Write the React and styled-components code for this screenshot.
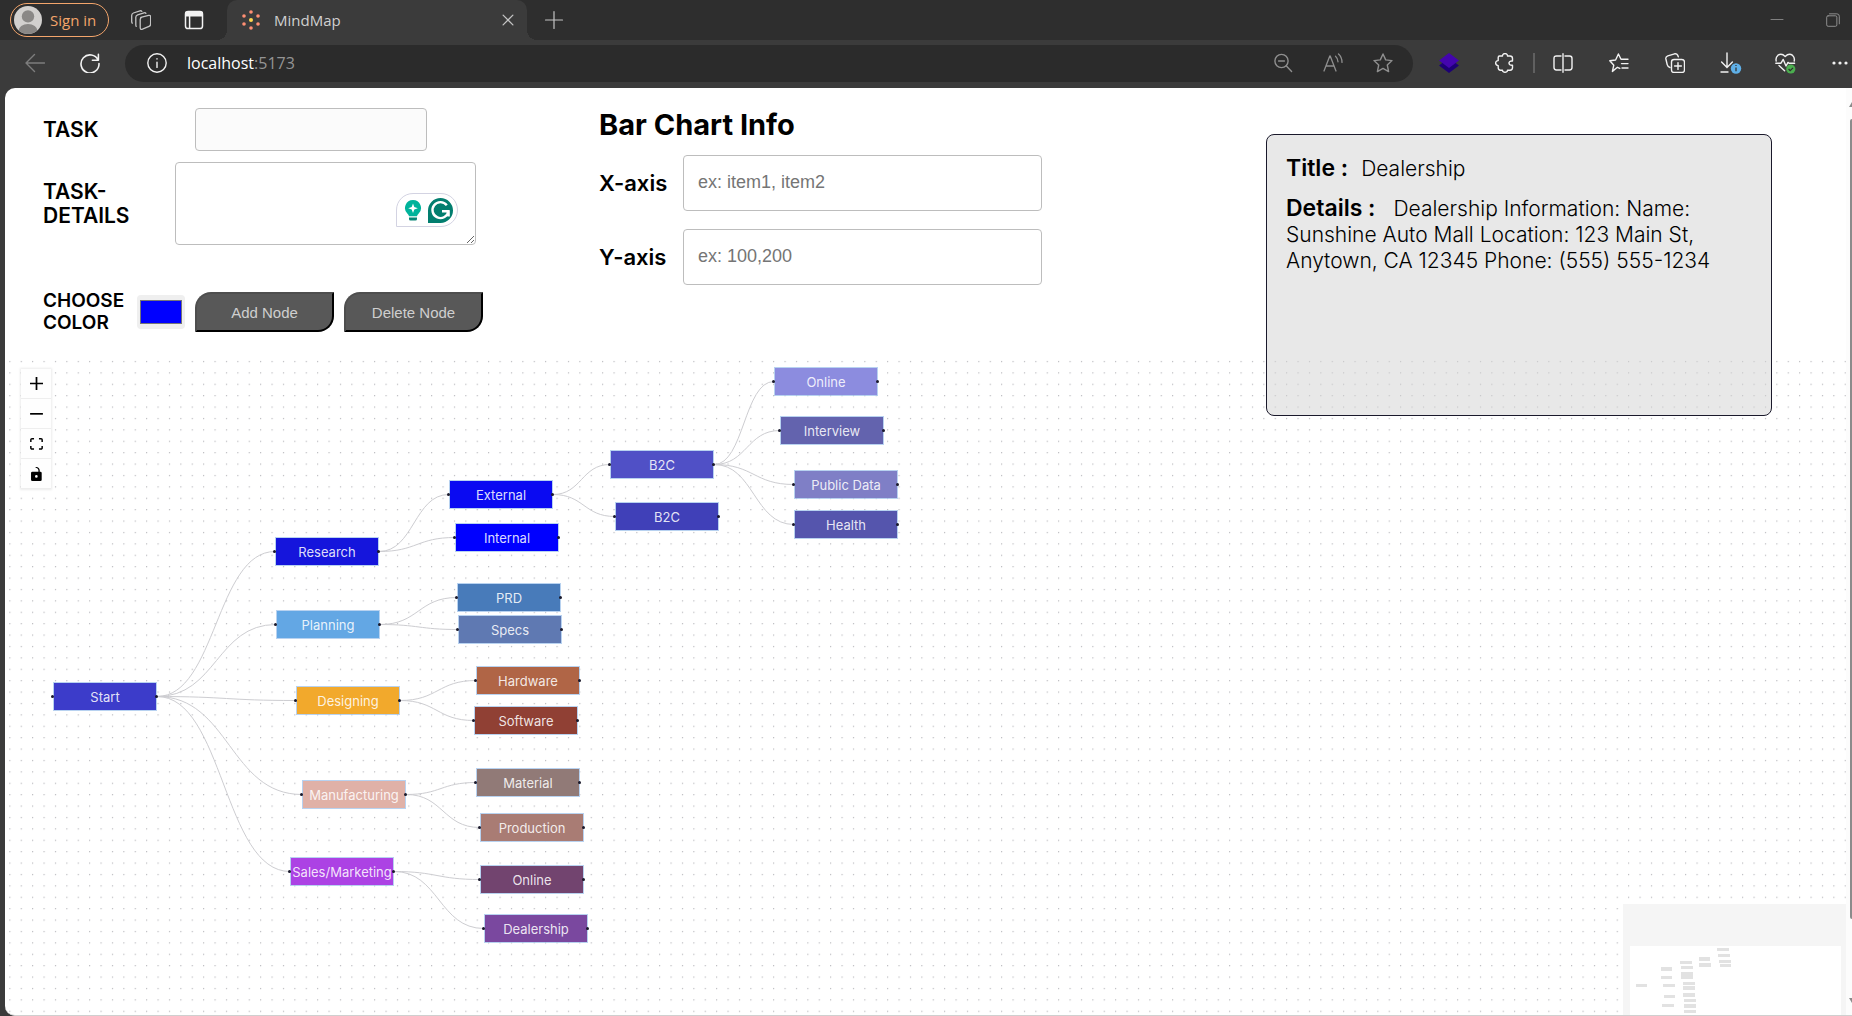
import React from "react";
import styled, { createGlobalStyle } from "styled-components";

const Global = createGlobalStyle`
  * { box-sizing: border-box; }
  html, body { margin: 0; padding: 0; }
  body { background: #3b3b3b; font-family: Inter, "Open Sans", sans-serif; color: #000; }
  button { font: inherit; cursor: pointer; }
`;

const Window = styled.div`
  display: flex;
  flex-direction: column;
  height: 100vh;
  overflow: hidden;
  background: #3b3b3b;
`;

/* ---------- browser frame ---------- */

const TabStrip = styled.header`
  display: flex;
  align-items: center;
  flex: none;
  height: 40px;
  padding: 0 12px 0 10px;
  background: #2e2e2e;
  font-family: "Open Sans", "Noto Sans", sans-serif;
  font-size: 15px;
`;

const SignIn = styled.button`
  display: flex;
  align-items: center;
  gap: 8px;
  width: 99px;
  height: 34px;
  padding: 0 3px;
  border: 1px solid #f3a56b;
  border-radius: 17px;
  background: none;
  color: #f3a56b;
  font-size: 15px;
  white-space: nowrap;
`;

const IconButton = styled.button`
  display: flex;
  flex: none;
  align-items: center;
  justify-content: ${(p) => p.$align || "center"};
  width: ${(p) => p.$w || 20}px;
  height: 30px;
  padding: 0;
  border: 0;
  background: none;
  color: ${(p) => p.$color || "#f2f2f2"};
`;

const StripTools = styled.div`
  display: flex;
  gap: 33px;
  margin: 0 23px 0 22px;
`;

const Tab = styled.div`
  position: relative;
  display: flex;
  align-items: center;
  gap: 13px;
  width: 300px;
  height: 40px;
  padding: 0 9px 0 14px;
  border-radius: 10px 10px 0 0;
  background: #3b3b3b;
  color: #d0d0d0;

  &::before, &::after {
    content: "";
    position: absolute;
    bottom: 0;
    width: 10px;
    height: 10px;
  }
  &::before { left: -10px; background: radial-gradient(circle at 0 0, transparent 10px, #3b3b3b 10px); }
  &::after { right: -10px; background: radial-gradient(circle at 100% 0, transparent 10px, #3b3b3b 10px); }
`;

const TabTitle = styled.span`
  flex: 1;
`;

const NewTab = styled.div`
  margin-left: 17px;
`;

const WindowButtons = styled.div`
  display: flex;
  gap: 33px;
  margin-left: auto;
`;

const Toolbar = styled.nav`
  display: flex;
  align-items: center;
  flex: none;
  height: 48px;
  padding: 0 4px 2px 25px;
  background: #3b3b3b;
`;

const NavButtons = styled.div`
  display: flex;
  gap: 35px;
  margin-right: 25px;
`;

const AddressBar = styled.div`
  display: flex;
  flex: 1;
  align-items: center;
  height: 37px;
  margin-right: 8px;
  padding: 0 5px 0 22px;
  border-radius: 19px;
  background: #2b2b2b;
`;

const Url = styled.div`
  flex: 1;
  margin-left: 20px;
  color: #fff;
  font-family: "Open Sans", "Noto Sans", sans-serif;
  font-size: 16px;
`;

const Port = styled.span`
  color: #949494;
`;

const Divider = styled.span`
  width: 2px;
  height: 20px;
  background: #606060;
`;

/* ---------- page ---------- */

const Page = styled.main`
  position: relative;
  display: flex;
  flex: 1;
  flex-direction: column;
  min-height: 0;
  margin-left: 5px;
  overflow: hidden;
  border-bottom: 1px solid #cfcfcf;
  border-radius: 10px 0 0 10px;
  background: #fff;
`;

const Forms = styled.section`
  display: grid;
  flex: none;
  grid-template-columns: 556px 443px;
  padding: 20px 38px 26px;
`;

const NodeForm = styled.form`
  display: flex;
  flex-direction: column;
  gap: 11px;
`;

const FormRow = styled.div`
  display: flex;
  align-items: center;
  gap: 10px;
  margin-top: ${(p) => p.$top || 0}px;
`;

const FormLabel = styled.label`
  width: ${(p) => p.$w}px;
  font-size: ${(p) => p.$size || 21}px;
  font-weight: 600;
  line-height: ${(p) => p.$line || 24}px;
`;

const TaskInput = styled.input`
  width: 232px;
  height: 43px;
  padding: 0 12px;
  border: 1px solid #bdbdbd;
  border-radius: 4px;
  background: #fbfbfb;
  font: 18px "Liberation Sans", sans-serif;
`;

const DetailsBox = styled.div`
  position: relative;
  display: flex;
`;

const DetailsInput = styled.textarea`
  width: 301px;
  height: 83px;
  border: 1px solid #bdbdbd;
  border-radius: 4px;
  background: #fff;
  font: 18px "Liberation Sans", sans-serif;
`;

const WritingBadge = styled.div`
  position: absolute;
  right: 18px;
  bottom: 18px;
  display: flex;
  align-items: center;
  gap: 6px;
  height: 34px;
  padding: 0 4px 0 7px;
  border: 1px solid #d3d3e2;
  border-radius: 17px 17px 17px 0;
  background: #fff;
`;

const ColorInput = styled.input`
  width: 48px;
  height: 34px;
  padding: 5px 3px;
  border: 0;
  border-radius: 4px;
  appearance: none;
  background: #efefef;

  &::-webkit-color-swatch-wrapper { padding: 0; }
  &::-webkit-color-swatch { border: 1px solid #777; border-radius: 0; }
`;

const NodeButton = styled.button`
  width: 139px;
  height: 40px;
  border: 2px solid;
  border-color: #4e4e4e #000 #000 #4e4e4e;
  border-radius: 16px 0;
  background: #585858;
  color: #cfcfcf;
  font-family: "Liberation Sans", Arial, sans-serif;
  font-size: 15px;
`;

const ChartForm = styled.form`
  display: flex;
  flex-direction: column;
  gap: 18px;
`;

const ChartTitle = styled.h2`
  margin: 0 0 -5px;
  font-size: 29px;
  font-weight: 700;
  line-height: 34px;
`;

const AxisRow = styled.div`
  display: flex;
  align-items: center;
`;

const AxisLabel = styled.label`
  width: 84px;
  font-size: 22px;
  font-weight: 600;
`;

const AxisInput = styled.input`
  flex: 1;
  height: 56px;
  padding: 0 14px 2px;
  border: 1px solid #bdbdbd;
  border-radius: 4px;
  background: #fff;
  font: 18px "Liberation Sans", sans-serif;

  &::placeholder { color: #757575; }
`;

const InfoCard = styled.aside`
  position: absolute;
  top: 46px;
  right: 80px;
  z-index: 2;
  width: 506px;
  height: 282px;
  padding: 20px 19px;
  border: 1px solid #1a192b;
  border-radius: 8px;
  background: rgba(209, 209, 209, 0.5);
  font-size: 21px;
  font-weight: 300;
  line-height: 26px;
`;

const InfoLine = styled.p`
  margin: 0 0 13px;
`;

const InfoName = styled.strong`
  margin-right: ${(p) => p.$gap}px;
  font-size: 23px;
  font-weight: 600;
`;

/* ---------- mind map ---------- */

const Flow = styled.section`
  position: relative;
  flex: 1;
  margin-right: 6px;
  overflow: hidden;
`;

const Layer = styled.svg`
  position: absolute;
  inset: 0;
  width: 100%;
  height: 100%;
`;

const Node = styled.div`
  position: absolute;
  display: flex;
  align-items: center;
  justify-content: center;
  width: 104px;
  height: 29px;
  border: 1px solid rgba(160, 195, 235, 0.75);
  background: ${(p) => p.$bg};
  background-clip: padding-box;
  color: rgba(255, 255, 255, 0.87);
  font-size: 13px;
  white-space: nowrap;

  &::before, &::after {
    content: "";
    position: absolute;
    top: 12px;
    width: 3px;
    height: 3px;
    border-radius: 50%;
    background: #1a192b;
  }
  &::before { left: -3px; }
  &::after { right: -2px; }
`;

const Controls = styled.div`
  position: absolute;
  top: 9px;
  left: 16px;
  display: flex;
  flex-direction: column;
  box-shadow: 0 0 2px 1px rgba(0, 0, 0, 0.08);
`;

const ControlButton = styled.button`
  display: flex;
  align-items: center;
  justify-content: center;
  width: 30px;
  height: 30px;
  padding: 0;
  border: 0;
  border-bottom: 1px solid #eee;
  background: #fefefe;
`;

const MiniMap = styled.div`
  position: absolute;
  right: 0;
  bottom: 0;
  width: 223px;
  height: 111px;
  background: #f5f5f5;
`;

const ScrollTrack = styled.div`
  position: absolute;
  top: 0;
  right: 0;
  bottom: 0;
  display: flex;
  flex-direction: column;
  align-items: flex-end;
  width: 6px;
  padding: 14px 0 12px;
  background: #fcfcfc;
  color: #8b8b8b;
`;

const ScrollThumb = styled.div`
  flex: 1;
  width: 2px;
  margin: 12px 0 79px;
  border-radius: 2px 0 0 2px;
  background: #8b8b8b;
`;

const Line = ({ size = 20, children, w = 1.4 }) => (
  <svg width={size} height={size} viewBox="0 0 20 20" fill="none" stroke="currentColor" strokeWidth={w} strokeLinecap="round" strokeLinejoin="round" aria-hidden="true">
    {children}
  </svg>
);

const Avatar = () => (
  <svg width="28" height="28" viewBox="0 0 28 28" aria-hidden="true">
    <clipPath id="face"><circle cx="14" cy="14" r="14" /></clipPath>
    <circle cx="14" cy="14" r="14" fill="#d2d0ce" />
    <g fill="#8a8886" clipPath="url(#face)">
      <circle cx="14" cy="10.4" r="6.2" />
      <ellipse cx="14" cy="25" rx="9.5" ry="7" />
    </g>
  </svg>
);

const Workspaces = () => (
  <Line w={1.3}>
    <path d="M9.8 7.4 17.6 5.4Q19.6 5 19.6 7V14Q19.6 15.8 18 16.4L11.5 19.2Q9.2 20 9.2 17.5V9.4Q9.2 7.7 11 7.1z" />
    <path d="M5.2 16.4Q4.8 15.8 4.8 14.8V7.2Q4.8 5.4 6.6 4.8L13 2.8Q14.4 2.4 14.9 3.4" />
    <path d="M1.2 13.2Q.7 12.4.7 11.6V5.4Q.7 3.6 2.4 3L9 .8Q10.2.5 10.8 1.4" />
  </Line>
);

const TabActions = () => (
  <Line w={1.5}>
    <rect x="1.5" y="1.5" width="17" height="17" rx="2.6" />
    <path d="M1.8 2.6H18.2V5.8H1.8z" fill="currentColor" />
    <path d="M5.6 6V18" />
  </Line>
);

const Favicon = () => (
  <svg width="20" height="20" viewBox="0 0 20 20" aria-hidden="true">
    <g fill="#ff8f73">
      <circle cx="10" cy="2" r="1.8" /><circle cx="10" cy="18" r="1.8" />
      <circle cx="3" cy="6" r="1.8" /><circle cx="17" cy="6" r="1.8" />
      <circle cx="3" cy="14" r="1.8" /><circle cx="17" cy="14" r="1.8" />
    </g>
    <circle cx="10" cy="10" r="2" fill="#ffd84d" />
  </svg>
);

const STAR = "M10 1 12.7 6.9 19 7.6 14.3 12 15.6 18.6 10 15.4 4.4 18.6 5.7 12 1 7.6 7.3 6.9z";

const pageTools = [
  ["Zoom out", <Line key="z"><circle cx="8.5" cy="8" r="6.6" /><path d="M5.6 8h5.8M13.2 12.8 18.6 18.4" /></Line>],
  ["Read aloud", <Line key="r" w={1.3}><path d="M1 18 6.8 3h.4L13 18M3 13h8M12.5 3.2Q15 5.4 15 8.8M15.5 1Q19 4 19 9.4" /></Line>],
  ["Add to favorites", <Line key="s"><path d={STAR} /></Line>],
];

const browserTools = [
  ["Split screen", 56, <Line key="a"><path d="M8 3H3.4Q1 3 1 5.4V14.6Q1 17 3.4 17H8M12 3h4.6Q19 3 19 5.4V14.6Q19 17 16.6 17H12M10 .8V19.2" /></Line>],
  ["Favorites", 56, <Line key="b"><path d="M10.8 15.4 8.4 14.3 3.4 18.4 4.8 12.2.8 7.8 6.6 7 9.4 1 12 6.2H19M12.5 10.6H19M13 15H19" /></Line>],
  ["Collections", 56, <Line key="c"><path d="M5 14.5Q2.8 14 2.2 11.6L.9 6Q.4 3.6 2.8 2.8L9.6.8Q11.8.4 12.8 2.4L13.3 3.8" /><rect x="6.5" y="6.5" width="13" height="13" rx="2.6" /><path d="M13 9.6v6.8M9.6 13h6.8" /></Line>],
  ["Downloads", 56, (
    <svg key="d" width="24" height="22" viewBox="0 0 24 22" fill="none" aria-hidden="true">
      <path d="M8 1v14M2.6 10 8 15.4 13.4 10M2 20h7" stroke="currentColor" strokeWidth="1.4" strokeLinecap="round" />
      <circle cx="17" cy="16.5" r="5.2" fill="#5fb0e8" />
      <path d="M17 15.6v3.6M17 13v1" stroke="#333" strokeWidth="1.3" />
    </svg>
  )],
  ["Browser essentials", 52, (
    <svg key="e" width="21" height="21" viewBox="0 0 21 21" fill="none" aria-hidden="true">
      <path d="M1.2 8Q.4 4.6 2.8 2.4Q6.4-.4 10.2 3.4Q14-.4 17.6 2.4Q20 4.6 19.2 8M4 12.4 9.6 17.8M.8 10.2H6L8.2 6.4 11 13 13 9.4 14 10.2H19.6" stroke="currentColor" strokeWidth="1.4" strokeLinecap="round" strokeLinejoin="round" />
      <circle cx="15.8" cy="16" r="4.6" fill="#4bae4f" />
      <path d="M13.6 16 15.2 17.6 18 14.8" stroke="#2d2d2d" strokeWidth="1.2" />
    </svg>
  )],
];

const controlIcons = [
  ["zoom in", "0 0 32 32", 13, "M32 18.133H18.133V32h-4.266V18.133H0v-4.266h13.867V0h4.266v13.867H32z"],
  ["zoom out", "0 0 32 5", 2, "M0 0h32v4.2H0z"],
  ["fit view", "0 0 32 30", 12, "M3.692 4.63c0-.53.4-.938.939-.938h5.215V0H4.708C2.13 0 0 2.054 0 4.63v5.216h3.692V4.631zM27.354 0h-5.2v3.692h5.17c.53 0 .984.4.984.939v5.215H32V4.631A4.624 4.624 0 0027.354 0zm.954 24.83c0 .532-.4.94-.939.94h-5.215v3.768h5.215c2.577 0 4.631-2.13 4.631-4.707v-5.139h-3.692v5.139zm-23.677.94c-.531 0-.939-.4-.939-.94v-5.138H0v5.139c0 2.577 2.13 4.707 4.708 4.707h5.138V25.77H4.631z"],
  ["toggle interactivity", "0 0 25 32", 14, "M21.333 10.667H19.81V7.619C19.81 3.429 16.38 0 12.19 0c-4.114 1.828-1.37 2.133.305 2.438 1.676.305 4.42 2.59 4.42 5.181v3.048H3.047A3.056 3.056 0 000 13.714v15.238A3.056 3.056 0 003.048 32h18.285a3.056 3.056 0 003.048-3.048V13.714a3.056 3.056 0 00-3.048-3.047zM12.19 24.533a3.056 3.056 0 01-3.047-3.047 3.056 3.056 0 013.047-3.048 3.056 3.056 0 013.048 3.048 3.056 3.056 0 01-3.048 3.047z"],
];

const nodes = {
  start: ["Start", 48, 322, "#3c3cca"],
  research: ["Research", 270, 177, "#1515dc"],
  planning: ["Planning", 271, 250, "#63a7e4"],
  designing: ["Designing", 291, 326, "#f2a92c"],
  manufacturing: ["Manufacturing", 297, 420, "#e0b1a7"],
  sales: ["Sales/Marketing", 285, 497, "#ac42e4"],
  external: ["External", 444, 120, "#0a0af2"],
  internal: ["Internal", 450, 163, "#0000ff"],
  prd: ["PRD", 452, 223, "#487bba"],
  specs: ["Specs", 453, 255, "#5f79b2"],
  hardware: ["Hardware", 471, 306, "#b06546"],
  software: ["Software", 469, 346, "#904034"],
  material: ["Material", 471, 408, "#917a77"],
  production: ["Production", 475, 453, "#a97c74"],
  online2: ["Online", 475, 505, "#72446f"],
  dealership: ["Dealership", 479, 554, "#7a489f"],
  b2c1: ["B2C", 605, 90, "#5050c6"],
  b2c2: ["B2C", 610, 142, "#4040b8"],
  online: ["Online", 769, 7, "#8c8cdf"],
  interview: ["Interview", 775, 56, "#6363ae"],
  publicData: ["Public Data", 789, 110, "#7f7fc6"],
  health: ["Health", 789, 150, "#5555ad"],
};

const edges = [
  ["start", "research"], ["start", "planning"], ["start", "designing"], ["start", "manufacturing"], ["start", "sales"],
  ["research", "external"], ["research", "internal"], ["planning", "prd"], ["planning", "specs"],
  ["designing", "hardware"], ["designing", "software"], ["manufacturing", "material"], ["manufacturing", "production"],
  ["sales", "online2"], ["sales", "dealership"], ["external", "b2c1"], ["external", "b2c2"],
  ["b2c1", "online"], ["b2c1", "interview"], ["b2c1", "publicData"], ["b2c1", "health"],
];

const edgePath = ([from, to]) => {
  const x1 = nodes[from][1] + 104;
  const y1 = nodes[from][2] + 14.5;
  const x2 = nodes[to][1];
  const y2 = nodes[to][2] + 14.5;
  const mid = (x1 + x2) / 2;
  return `M${x1} ${y1}C${mid} ${y1} ${mid} ${y2} ${x2} ${y2}`;
};

const miniNodes = [
  [13, 80, 11, 3], [38, 63, 11, 4], [38, 72, 11, 3], [40, 80, 12, 3], [41, 91, 11, 3], [39, 100, 12, 3],
  [57, 57, 12, 3], [58, 62, 12, 3], [58, 68, 12, 7], [60, 78, 12, 3], [60, 82, 12, 4], [60, 89, 12, 4],
  [61, 95, 12, 3], [61, 100, 12, 4], [61, 106, 12, 3], [76, 53, 11, 4], [76, 59, 12, 4],
  [94, 44, 12, 3], [95, 50, 12, 3], [96, 56, 12, 3], [97, 60, 11, 3],
];

export default function App() {
  return (
    <Window>
      <Global />
      <TabStrip>
        <SignIn><Avatar />Sign in</SignIn>
        <StripTools>
          <IconButton $color="#c4c4c4" aria-label="Workspaces"><Workspaces /></IconButton>
          <IconButton aria-label="Tab actions"><TabActions /></IconButton>
        </StripTools>
        <Tab>
          <Favicon />
          <TabTitle>MindMap</TabTitle>
          <IconButton $color="#c4c4c4" aria-label="Close tab"><Line w={1.8} size={14}><path d="M3 3 17 17M17 3 3 17" /></Line></IconButton>
        </Tab>
        <NewTab>
          <IconButton $color="#c4c4c4" aria-label="New tab"><Line w={1.2}><path d="M10 1.5V18.5M1.5 10H18.5" /></Line></IconButton>
        </NewTab>
        <WindowButtons>
          <IconButton $color="#808080" aria-label="Minimize"><Line w={1}><path d="M4 9.5H16" /></Line></IconButton>
          <IconButton $color="#909090" aria-label="Restore" $align="flex-end"><Line size={14}><rect x="1" y="4" width="14.5" height="15" rx="2" /><path d="M5 1.2H15.5Q19 1.2 19 4.6V15.5" /></Line></IconButton>
        </WindowButtons>
      </TabStrip>

      <Toolbar>
        <NavButtons>
          <IconButton $color="#7d7d7d" aria-label="Back"><Line><path d="M19.5 10H1M9.5 1.6 1 10 9.5 18.4" /></Line></IconButton>
          <IconButton aria-label="Refresh"><Line w={1.6}><path d="M18.2 7.2A9 9 0 1 0 19 10.5M18.4 1.4V7.2H12.4" /></Line></IconButton>
        </NavButtons>
        <AddressBar>
          <IconButton aria-label="Site information"><Line><circle cx="10" cy="10" r="9.2" /><path d="M10 9.2V14.4M10 5.8V6" /></Line></IconButton>
          <Url role="textbox" aria-label="Address">localhost<Port>:5173</Port></Url>
          {pageTools.map(([name, icon]) => (
            <IconButton key={name} $w={50} $color="#8f8f8f" aria-label={name}>{icon}</IconButton>
          ))}
        </AddressBar>
        <IconButton $w={56} aria-label="Layers extension">
          <svg width="20" height="20" viewBox="0 0 20 20" aria-hidden="true">
            <path d="M0 12.5 10 5 20 12.5 10 20z" fill="#1d0075" />
            <path d="M0 7.5 10 0 20 7.5 10 15z" fill="#4405ae" />
          </svg>
        </IconButton>
        <IconButton $w={56} aria-label="Extensions">
          <Line><path d="M4.5 3H7.5C7.2-.2 12.8-.2 12.5 3H15Q17.5 3 17.5 5.5V8C12.8 7.4 12.8 12.8 17.5 12.2V14.8Q17.5 17.2 15 17.2H12.5C12.6 20 7.4 20 7.5 17.2H5.5Q3.2 17.2 3.2 14.8V12.6C-.2 12.6-.2 7.6 3.2 7.6V4.5Q3.2 3 4.5 3z" /></Line>
        </IconButton>
        <Divider />
        {browserTools.map(([name, width, icon]) => (
          <IconButton key={name} $w={width} aria-label={name}>{icon}</IconButton>
        ))}
        <IconButton $w={37} $align="flex-end" aria-label="Settings and more">
          <svg width="16" height="4" viewBox="0 0 16 4" fill="currentColor" aria-hidden="true"><circle cx="2" cy="2" r="1.6" /><circle cx="8" cy="2" r="1.6" /><circle cx="14" cy="2" r="1.6" /></svg>
        </IconButton>
      </Toolbar>

      <Page>
        <Forms>
          <NodeForm onSubmit={(e) => e.preventDefault()}>
            <FormRow>
              <FormLabel htmlFor="task" $w={142}>TASK</FormLabel>
              <TaskInput id="task" type="text" />
            </FormRow>
            <FormRow>
              <FormLabel htmlFor="details" $w={122}>TASK-<br />DETAILS</FormLabel>
              <DetailsBox>
                <DetailsInput id="details" />
                <WritingBadge>
                  <svg width="18" height="22" viewBox="0 0 18 22" aria-hidden="true">
                    <path d="M9 1a8 8 0 0 0-5.5 13.8Q4.8 16 5 17.2H13Q13.2 16 14.5 14.8A8 8 0 0 0 9 1z" fill="#00b39b" />
                    <path d="M5 18.5H13V20Q13 21.5 11.5 21.5H6.5Q5 21.5 5 20z" fill="#068575" />
                    <path d="M9 4.5 10.3 7.9 13.8 9.2 10.3 10.5 9 14 7.7 10.5 4.2 9.2 7.7 7.9z" fill="#fff" />
                  </svg>
                  <svg width="25" height="25" viewBox="0 0 25 25" aria-hidden="true">
                    <path d="M12.5 0A12.5 12.5 0 1 1 12.5 25H0V12.5A12.5 12.5 0 0 1 12.5 0z" fill="#027e6f" />
                    <path d="M18.8 7.2A8 8 0 1 0 20.4 13.2H14M20.6 13V18.4" fill="none" stroke="#fff" strokeWidth="2.4" />
                  </svg>
                </WritingBadge>
              </DetailsBox>
            </FormRow>
            <FormRow $top={34}>
              <FormLabel htmlFor="color" $w={84} $size={19} $line={22}>CHOOSE COLOR</FormLabel>
              <ColorInput id="color" type="color" defaultValue="#0000ff" />
              <NodeButton type="button">Add Node</NodeButton>
              <NodeButton type="button">Delete Node</NodeButton>
            </FormRow>
          </NodeForm>

          <ChartForm onSubmit={(e) => e.preventDefault()}>
            <ChartTitle>Bar Chart Info</ChartTitle>
            <AxisRow>
              <AxisLabel htmlFor="x-axis">X-axis</AxisLabel>
              <AxisInput id="x-axis" placeholder="ex: item1, item2" />
            </AxisRow>
            <AxisRow>
              <AxisLabel htmlFor="y-axis">Y-axis</AxisLabel>
              <AxisInput id="y-axis" placeholder="ex: 100,200" />
            </AxisRow>
          </ChartForm>
        </Forms>

        <InfoCard>
          <InfoLine><InfoName $gap={13}>Title :</InfoName>Dealership</InfoLine>
          <InfoLine>
            <InfoName $gap={18}>Details :</InfoName>
            Dealership Information: Name: Sunshine Auto Mall Location: 123 Main St, Anytown, CA 12345 Phone: (555) 555-1234
          </InfoLine>
        </InfoCard>

        <Flow>
          <Layer aria-hidden="true">
            <pattern id="dots" x="4.3" y="0.9" width="11.4" height="11.4" patternUnits="userSpaceOnUse">
              <circle cx="0.6" cy="0.6" r="0.6" fill="#a5a5ab" />
            </pattern>
            <rect width="100%" height="100%" fill="url(#dots)" />
            {edges.map((e) => (
              <path key={e.join()} d={edgePath(e)} fill="none" stroke="#cdcdd1" strokeWidth="1" />
            ))}
          </Layer>
          {Object.entries(nodes).map(([id, [label, x, y, bg]]) => (
            <Node key={id} $bg={bg} style={{ left: x, top: y }}>{label}</Node>
          ))}
          <Controls>
            {controlIcons.map(([name, box, h, d]) => (
              <ControlButton key={name} aria-label={name}>
                <svg width="13" height={h} viewBox={box} aria-hidden="true"><path d={d} /></svg>
              </ControlButton>
            ))}
          </Controls>
          <MiniMap>
            <svg width="223" height="111" viewBox="0 0 223 111" aria-label="Mini map">
              <rect x="7" y="42" width="211" height="69" fill="#fff" />
              {miniNodes.map(([x, y, w, h]) => (
                <rect key={`${x}-${y}`} x={x} y={y} width={w} height={h} fill="#e2e2e2" />
              ))}
            </svg>
          </MiniMap>
        </Flow>

        <ScrollTrack aria-hidden="true">
          <svg width="3" height="5" viewBox="0 0 3 5"><path d="M0 5 3 0V5z" fill="currentColor" /></svg>
          <ScrollThumb />
          <svg width="3" height="5" viewBox="0 0 3 5"><path d="M0 0H3V5z" fill="currentColor" /></svg>
        </ScrollTrack>
      </Page>
    </Window>
  );
}
